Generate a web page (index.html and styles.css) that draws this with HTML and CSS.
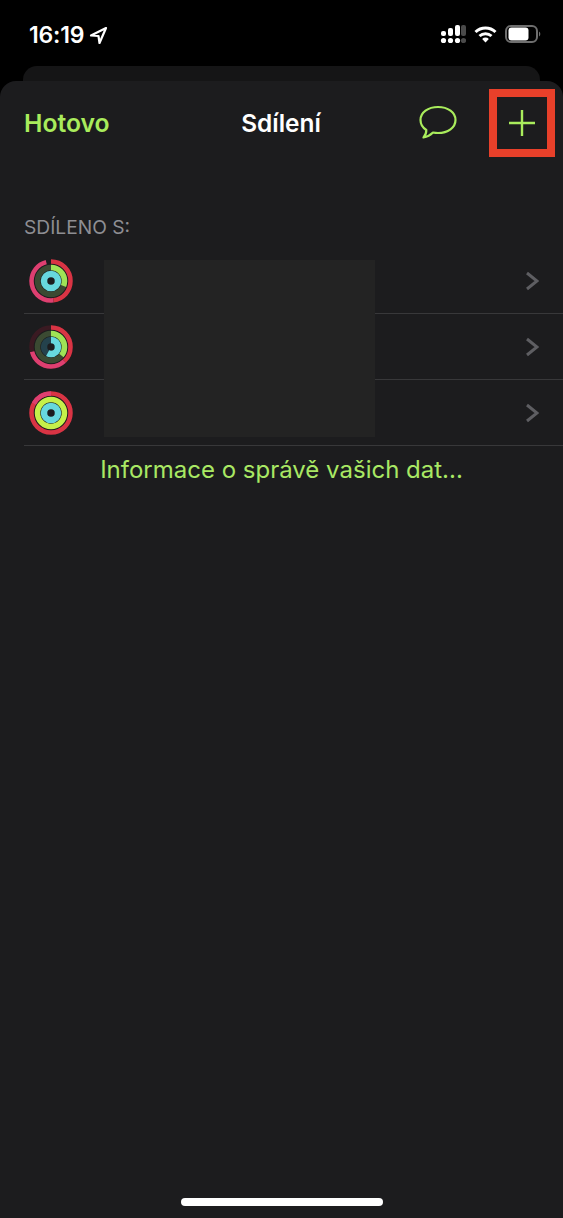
FILE: index.html
```html
<!DOCTYPE html>
<html lang="cs">

<head>
  <meta charset="UTF-8">
  <meta name="viewport" content="width=device-width, initial-scale=1.0">
  <title>Sdílení</title>
  <link rel="stylesheet" href="styles.css">
</head>

<body>
  <div class="status">
    <div class="status-left">
      <span class="clock">16:19</span>
      <svg class="arrow" width="19" height="19" viewBox="0 0 19 19">
        <path d="M17 2 L2 9.5 L9.5 10 L10.5 17 Z" fill="none" stroke="#fff" stroke-width="2.2" stroke-linejoin="round"/>
      </svg>
    </div>
    <div class="status-right">
      <svg width="26" height="20" viewBox="0 0 26 20">
        <rect x="1" y="7" width="5" height="5" rx="2" fill="#fff"/>
        <rect x="8" y="4" width="5" height="8" rx="2" fill="#fff"/>
        <rect x="15" y="1" width="5" height="11" rx="2" fill="#fff"/>
        <rect x="21" y="1" width="5" height="11" rx="2" fill="#4a4a4a"/>
        <circle cx="3.5" cy="16.5" r="2.6" fill="#fff"/>
        <circle cx="10.5" cy="16.5" r="2.6" fill="#fff"/>
        <circle cx="17.5" cy="16.5" r="2.6" fill="#fff"/>
        <circle cx="23.5" cy="16.5" r="2.6" fill="#4a4a4a"/>
      </svg>
      <svg width="23" height="17" viewBox="0 0 23 17">
        <path d="M1.5 6 A14.5 14.5 0 0 1 21.5 6" fill="none" stroke="#fff" stroke-width="3"/>
        <path d="M5.5 10 A9 9 0 0 1 17.5 10" fill="none" stroke="#fff" stroke-width="3"/>
        <path d="M8.2 13 A4.6 4.6 0 0 1 14.8 13 L11.5 16.6 Z" fill="#fff"/>
      </svg>
      <svg width="37" height="18" viewBox="0 0 37 18">
        <rect x="1" y="1" width="31" height="16" rx="5" fill="none" stroke="#6e6e6e" stroke-width="2"/>
        <rect x="3.5" y="2.5" width="20" height="13" rx="3" fill="#fff"/>
        <path d="M34 6.5 A3 3 0 0 1 34 11.5 Z" fill="#6e6e6e"/>
      </svg>
    </div>
  </div>

  <div class="back-card"></div>

  <div class="sheet">
    <div class="nav">
      <a class="done">Hotovo</a>
      <div class="title">Sdílení</div>
      <div class="nav-actions">
        <svg width="40" height="38" viewBox="0 0 40 38">
          <path d="M20 3 C30 3 37.500 8.500 37.500 16 C37.500 23.500 30 29 20 29 C18 29 16.500 28.800 15 28.500 C12.500 31 9.500 32.800 5.500 33.500 C7.500 31 8.500 28.500 8.300 26 C4.500 23.500 2.500 20 2.500 16 C2.500 8.500 10 3 20 3 Z" fill="none" stroke="#a9ec5c" stroke-width="2.2" stroke-linejoin="round"/>
        </svg>
        <svg class="plus" width="28" height="28" viewBox="0 0 28 28">
          <path d="M14 1 V27 M1 14 H27" stroke="#a9ec5c" stroke-width="2.4"/>
        </svg>
      </div>
      <div class="highlight"></div>
    </div>

    <div class="section-label">SDÍLENO S:</div>

    <div class="list">
      <div class="row">
        <svg class="rings" width="44" height="44" viewBox="0 0 44 44">
          <circle class="track-green" cx="22" cy="22" r="13.500"/>
          <circle class="arc red outer" cx="22" cy="22" r="19.500" pathLength="100" stroke-dasharray="48 100"/>
          <circle class="arc pink outer" cx="22" cy="22" r="19.500" pathLength="100" stroke-dasharray="48 100" stroke-dashoffset="-48"/>
          <circle class="arc green" cx="22" cy="22" r="13.500" pathLength="100" stroke-dasharray="31 100"/>
          <circle class="arc cyan" cx="22" cy="22" r="7" pathLength="100" stroke-dasharray="100 100"/>
        </svg>
        <svg class="chevron" width="14" height="20" viewBox="0 0 14 20">
          <path d="M2 2 L12 10 L2 18" fill="none" stroke="#5e5e62" stroke-width="3"/>
        </svg>
      </div>
      <div class="row">
        <svg class="rings" width="44" height="44" viewBox="0 0 44 44">
          <circle class="track-red outer" cx="22" cy="22" r="19.500"/>
          <circle class="track-green" cx="22" cy="22" r="13.500"/>
          <circle class="track-cyan" cx="22" cy="22" r="7"/>
          <circle class="arc red outer" cx="22" cy="22" r="19.500" pathLength="100" stroke-dasharray="38 100"/>
          <circle class="arc pink outer" cx="22" cy="22" r="19.500" pathLength="100" stroke-dasharray="33 100" stroke-dashoffset="-38"/>
          <circle class="arc green" cx="22" cy="22" r="13.500" pathLength="100" stroke-dasharray="36 100"/>
          <circle class="arc cyan" cx="22" cy="22" r="7" pathLength="100" stroke-dasharray="58 100"/>
        </svg>
        <svg class="chevron" width="14" height="20" viewBox="0 0 14 20">
          <path d="M2 2 L12 10 L2 18" fill="none" stroke="#5e5e62" stroke-width="3"/>
        </svg>
      </div>
      <div class="row">
        <svg class="rings" width="44" height="44" viewBox="0 0 44 44">
          <circle class="arc red outer" cx="22" cy="22" r="19.500" pathLength="100" stroke-dasharray="100 100"/>
          <circle class="arc pink outer" cx="22" cy="22" r="19.500" pathLength="100" stroke-dasharray="22 100" stroke-dashoffset="-83"/>
          <circle class="arc lime" cx="22" cy="22" r="13.500" pathLength="100" stroke-dasharray="100 100"/>
          <circle class="arc cyan" cx="22" cy="22" r="7" pathLength="100" stroke-dasharray="100 100"/>
        </svg>
        <svg class="chevron" width="14" height="20" viewBox="0 0 14 20">
          <path d="M2 2 L12 10 L2 18" fill="none" stroke="#5e5e62" stroke-width="3"/>
        </svg>
      </div>
      <div class="redacted"></div>
    </div>

    <a class="info-link">Informace o správě vašich dat...</a>

    <div class="home-bar"></div>
  </div>
</body>

</html>
```

FILE: styles.css
```css
* {
  box-sizing: border-box;
}

html, body {
  margin: 0;
  height: 100%;
}

body {
  display: flex;
  flex-direction: column;
  height: 1218px;
  overflow: hidden;
  background-color: #000;
  font-family: Inter, "Liberation Sans", sans-serif;
}

/* Status bar */
.status {
  height: 66px;
  flex: none;
  display: flex;
  justify-content: space-between;
  align-items: flex-start;
  padding: 24px 21px 0 29px;
  color: #fff;
}

.status-left {
  display: flex;
  align-items: center;
  gap: 5px;
}

.clock {
  font-size: 23px;
  line-height: 22px;
  font-weight: 600;
  letter-spacing: -0.2px;
}

.status-right {
  display: flex;
  align-items: center;
  gap: 8px;
}

.back-card {
  height: 15px;
  flex: none;
  margin: 0 23px;
  background-color: #151516;
  border-radius: 14px 14px 0 0;
}

/* Sheet */
.sheet {
  flex: 1;
  display: flex;
  flex-direction: column;
  background-color: #1c1c1e;
  border-radius: 16px 16px 0 0;
}

.nav {
  position: relative;
  height: 84px;
  flex: none;
  display: grid;
  grid-template-columns: 1fr auto 1fr;
  align-items: center;
  padding: 0 27px 0 24px;
}

.done {
  color: #a9ec5c;
  font-size: 24.7px;
  font-weight: 600;
}

.title {
  margin-left: 2px;
  color: #fff;
  font-size: 24.4px;
  font-weight: 600;
}

.nav-actions {
  display: flex;
  justify-content: flex-end;
  align-items: center;
  gap: 50px;
}

.highlight {
  position: absolute;
  left: 489px;
  top: 8px;
  width: 66px;
  height: 68px;
  border: 8px solid #e8402a;
}

.section-label {
  padding: 51px 24px 0;
  height: 83px;
  flex: none;
  color: #8e8e93;
  font-size: 19.2px;
  line-height: 22px;
}

.list {
  position: relative;
  flex: none;
}

.row {
  height: 66px;
  margin-left: 24px;
  display: flex;
  justify-content: space-between;
  align-items: center;
  padding: 0 24px 0 5px;
  border-bottom: 1px solid #38383a;
}

/* Activity rings */
.rings circle {
  fill: none;
  stroke-width: 5.5;
}

.rings .outer {
  stroke-width: 4.5;
}

.rings .cyan, .rings .track-cyan {
  stroke-width: 6.5;
}

.rings .arc {
  transform: rotate(-90deg);
  transform-origin: 22px 22px;
}

.track-red {
  stroke: #3a1a22;
}

.track-green {
  stroke: #3b4a32;
}

.track-cyan {
  stroke: #24424c;
}

.red {
  stroke: #d93444;
}

.pink {
  stroke: #de3f70;
}

.green {
  stroke: #9fe356;
}

.lime {
  stroke: #c5f04a;
}

.cyan {
  stroke: #67d8de;
}

.redacted {
  position: absolute;
  left: 104px;
  top: 12px;
  width: 271px;
  height: 177px;
  background-color: #232323;
}

.info-link {
  margin-top: 8px;
  text-align: center;
  color: #a9e864;
  font-size: 24px;
  line-height: 32px;
}

.home-bar {
  margin: auto auto 12px;
  width: 202px;
  height: 8px;
  border-radius: 4px;
  background-color: #fff;
}
```
